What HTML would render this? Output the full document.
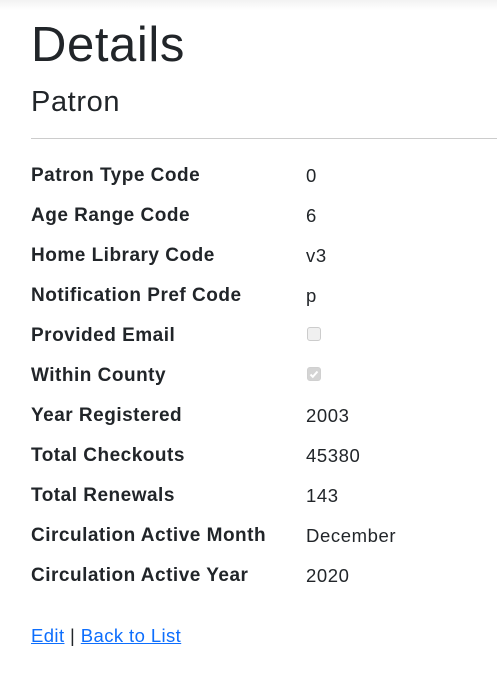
<!DOCTYPE html>
<html><head><meta charset="utf-8"><style>
body{margin:0;width:497px;height:696px;background:#fff;font-family:"Liberation Sans",sans-serif;color:#212529;position:relative;overflow:hidden}
.top{position:absolute;left:0;top:0;width:497px;height:10px;background:linear-gradient(#f2f2f2,#fff)}
.a{position:absolute;white-space:nowrap}
h1{position:absolute;left:31px;top:16px;margin:0;font-size:49px;font-weight:500;line-height:58px;letter-spacing:0.6px}
h2{position:absolute;left:31px;top:85px;margin:0;font-size:29px;font-weight:500;line-height:34px;letter-spacing:0.6px}
hr{position:absolute;left:31px;top:138px;width:466px;margin:0;border:0;border-top:1px solid #ccc}
.l{left:31px;font-weight:bold;font-size:19px;line-height:24px;letter-spacing:0.5px}
.v{left:306px;font-size:18.5px;line-height:24px;letter-spacing:0.6px}
.cb{position:absolute;left:307px;width:12px;height:12px;border:1px solid #ccc;border-radius:3px;background:#f0f0f0}
.cb.c{background:#d4d4d4;border-color:#d0d0d0}
a{color:#0d6efd;text-decoration:underline}
</style></head><body>
<div class="top"></div>
<h1>Details</h1>
<h2>Patron</h2>
<hr>
<div class="a l" style="top:164px">Patron Type Code</div><div class="a v" style="top:164px">0</div>
<div class="a l" style="top:204px">Age Range Code</div><div class="a v" style="top:204px">6</div>
<div class="a l" style="top:244px">Home Library Code</div><div class="a v" style="top:244px">v3</div>
<div class="a l" style="top:284px">Notification Pref Code</div><div class="a v" style="top:284px">p</div>
<div class="a l" style="top:324px">Provided Email</div><div class="cb" style="top:327px"></div>
<div class="a l" style="top:364px">Within County</div><div class="cb c" style="top:367px"><svg width="12" height="12" viewBox="0 0 12 12" style="position:absolute;left:0;top:0"><path d="M2.5 6.5l2.3 2.3L9.5 3.5" stroke="#fff" stroke-width="2" fill="none"/></svg></div>
<div class="a l" style="top:404px">Year Registered</div><div class="a v" style="top:404px">2003</div>
<div class="a l" style="top:444px">Total Checkouts</div><div class="a v" style="top:444px">45380</div>
<div class="a l" style="top:484px">Total Renewals</div><div class="a v" style="top:484px">143</div>
<div class="a l" style="top:524px">Circulation Active Month</div><div class="a v" style="top:524px">December</div>
<div class="a l" style="top:564px">Circulation Active Year</div><div class="a v" style="top:564px">2020</div>
<div class="a" style="left:31px;top:624px;font-size:18.5px;line-height:24px;letter-spacing:0.4px"><a>Edit</a> | <a>Back to List</a></div>
</body></html>
